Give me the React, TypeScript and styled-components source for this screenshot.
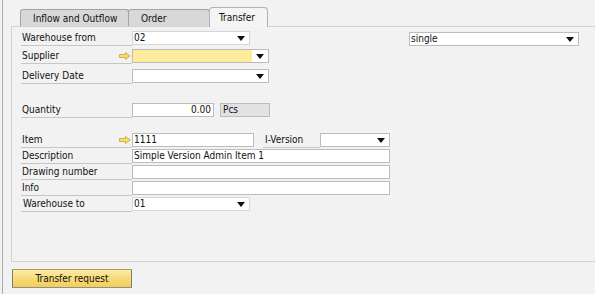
import React from 'react';
import styled, { createGlobalStyle, css } from 'styled-components';

const GlobalStyle = createGlobalStyle`
    html, body {
        margin: 0;
        padding: 0;
        background: #f2f2f2;
    }
    body {
        font-family: "DejaVu Sans Condensed", "DejaVu Sans", sans-serif;
        font-stretch: condensed;
        font-size: 10px;
        color: #111;
    }
`;

const Window = styled.div`
    width: 593px;
    height: 294px;
    margin-left: 2px;
    border-left: 1px solid #ababab;
    background: #f2f2f2;
    display: flex;
    flex-direction: column;
    overflow: hidden;
`;

const Body = styled.div`
    margin-left: 8px;
    display: flex;
    flex-direction: column;
`;

const TabStrip = styled.div`
    display: flex;
    align-items: flex-end;
    height: 19px;
    padding-top: 7px;
    padding-left: 9px;
`;

interface TabProps {
    $active?: boolean,
    $width: number
}

const Tab = styled.div<TabProps>`
    box-sizing: border-box;
    width: ${({ $width }) => $width}px;
    height: 17px;
    margin-left: -1px;
    padding-left: 12px;
    display: flex;
    align-items: center;
    background: #d8d8d8;
    border: 1px solid #a3a3a3;
    border-bottom: none;
    border-radius: 3px 3px 0 0;
    white-space: nowrap;
    &:first-child {
        margin-left: 0;
    }
    ${({ $active }) => $active &&
    css`
        position: relative;
        height: 20px;
        margin-bottom: -1px;
        padding-left: 9px;
        padding-bottom: 1px;
        background: #f4f4f4;
        border-color: #b2b2b2;
        border-radius: 4px 4px 0 0;
    `}
`;

const Panel = styled.div`
    box-sizing: border-box;
    height: 236px;
    padding: 4px 17px 0 9px;
    border-top: 1px solid #d2d2d2;
    border-left: 1px solid #d2d2d2;
    border-bottom: 1px solid #d2d2d2;
    display: flex;
    flex-direction: column;
`;

const Row = styled.div<{ $gap: number }>`
    display: flex;
    align-items: flex-start;
    height: 15px;
    margin-top: ${({ $gap }) => $gap}px;
`;

interface LabelProps {
    $width?: number,
    $indent?: number,
    $offset?: number
}

const Label = styled.div<LabelProps>`
    box-sizing: border-box;
    width: ${({ $width }) => $width ?? 111}px;
    height: 15px;
    line-height: 14px;
    margin-left: ${({ $offset }) => $offset ?? 0}px;
    padding-left: ${({ $indent }) => $indent ?? 1}px;
    border-bottom: 1px solid #c6c6c6;
    display: flex;
    align-items: flex-start;
    justify-content: space-between;
    white-space: nowrap;
`;

const fieldBase = css`
    box-sizing: border-box;
    height: 14px;
    line-height: 12px;
    border: 1px solid #bcbcbc;
    background: #fff;
    white-space: nowrap;
    overflow: hidden;
`;

const TextField = styled.div<{ $width: number, $align?: string }>`
    ${fieldBase}
    width: ${({ $width }) => $width}px;
    padding: 0 2px 0 1px;
    text-align: ${({ $align }) => $align ?? 'left'};
`;

const UnitBox = styled.div`
    ${fieldBase}
    width: 50px;
    margin-left: 6px;
    padding-left: 2px;
    background: #e2e2e2;
`;

const Select = styled.div<{ $width: number, $light?: boolean, $push?: boolean }>`
    ${fieldBase}
    width: ${({ $width }) => $width}px;
    display: flex;
    border-color: ${({ $light }) => $light ? '#d6d6d6' : '#bcbcbc'};
    ${({ $push }) => $push && css`
        margin-left: auto;
        margin-top: 1px;
    `}
`;

const SelectValue = styled.div<{ $mandatory?: boolean }>`
    flex: 1;
    padding-left: 1px;
    background: ${({ $mandatory }) => $mandatory ? '#fdeb9b' : '#fff'};
`;

const SelectButton = styled.div`
    width: 16px;
    display: flex;
    align-items: center;
    justify-content: center;
    background: #fff;
`;

const LinkArrowWrap = styled.span`
    display: flex;
    align-items: center;
    height: 14px;
    margin-right: 1px;
`;

const Footer = styled.div`
    padding: 7px 0 0 1px;
`;

const ActionButton = styled.button`
    box-sizing: border-box;
    width: 120px;
    height: 19px;
    padding: 0;
    font: inherit;
    font-family: "DejaVu Sans Condensed", "DejaVu Sans", sans-serif;
    font-stretch: condensed;
    font-size: 10px;
    color: #111;
    background: linear-gradient(#fcebaa, #f8dc7c 45%, #f3cd56);
    border: 1px solid #b49b52;
    border-left-color: #7d7d7d;
    border-right-color: #7d7d7d;
    border-bottom-color: #8f8f8f;
`;

const DropArrow: React.FC = () => (
    <svg width="8" height="5" viewBox="0 0 8 5">
        <polygon points="0,0 8,0 4,5" fill="#111" />
    </svg>
);

const LinkArrow: React.FC = () => (
    <LinkArrowWrap>
        <svg width="12" height="8" viewBox="0 0 12 8">
            <path
                d="M0.5 2.5 H6.5 V0.5 L11.2 4 L6.5 7.5 V5.5 H0.5 Z"
                fill="#f6dc6c"
                stroke="#cfb24a"
                strokeWidth="1"
            />
        </svg>
    </LinkArrowWrap>
);

interface DropdownProps {
    width: number,
    value?: string,
    mandatory?: boolean,
    light?: boolean,
    push?: boolean
}

const Dropdown: React.FC<DropdownProps> = ({ width, value, mandatory, light, push }) => (
    <Select $width={width} $light={light} $push={push}>
        <SelectValue $mandatory={mandatory}>{value}</SelectValue>
        <SelectButton><DropArrow /></SelectButton>
    </Select>
);

const tabs = [
    { title: 'Inflow and Outflow', width: 109 },
    { title: 'Order', width: 82 },
    { title: 'Transfer', width: 59, active: true },
];

const App: React.FC = () => {
    return (
        <>
            <GlobalStyle />
            <Window>
                <Body>
                    <TabStrip>
                        {tabs.map((tab) =>
                            <Tab key={tab.title} $width={tab.width} $active={tab.active}>
                                {tab.title}
                            </Tab>
                        )}
                    </TabStrip>
                    <Panel>
                        <Row $gap={0}>
                            <Label>Warehouse from</Label>
                            <Dropdown width={118} value="02" light />
                            <Dropdown width={170} value="single" push />
                        </Row>
                        <Row $gap={3}>
                            <Label>Supplier<LinkArrow /></Label>
                            <Dropdown width={137} mandatory />
                        </Row>
                        <Row $gap={5}>
                            <Label>Delivery Date</Label>
                            <Dropdown width={137} />
                        </Row>
                        <Row $gap={19}>
                            <Label>Quantity</Label>
                            <TextField $width={82} $align="right">0.00</TextField>
                            <UnitBox>Pcs</UnitBox>
                        </Row>
                        <Row $gap={15}>
                            <Label>Item<LinkArrow /></Label>
                            <TextField $width={122}>1111</TextField>
                            <Label $width={57} $indent={2} $offset={9}>I-Version</Label>
                            <Dropdown width={70} />
                        </Row>
                        <Row $gap={1}>
                            <Label>Description</Label>
                            <TextField $width={258}>Simple Version Admin Item 1</TextField>
                        </Row>
                        <Row $gap={1}>
                            <Label>Drawing number</Label>
                            <TextField $width={258} />
                        </Row>
                        <Row $gap={1}>
                            <Label>Info</Label>
                            <TextField $width={258} />
                        </Row>
                        <Row $gap={1}>
                            <Label $indent={2}>Warehouse to</Label>
                            <Dropdown width={118} value="01" light />
                        </Row>
                    </Panel>
                    <Footer>
                        <ActionButton>Transfer request</ActionButton>
                    </Footer>
                </Body>
            </Window>
        </>
    );
};

export default App;
